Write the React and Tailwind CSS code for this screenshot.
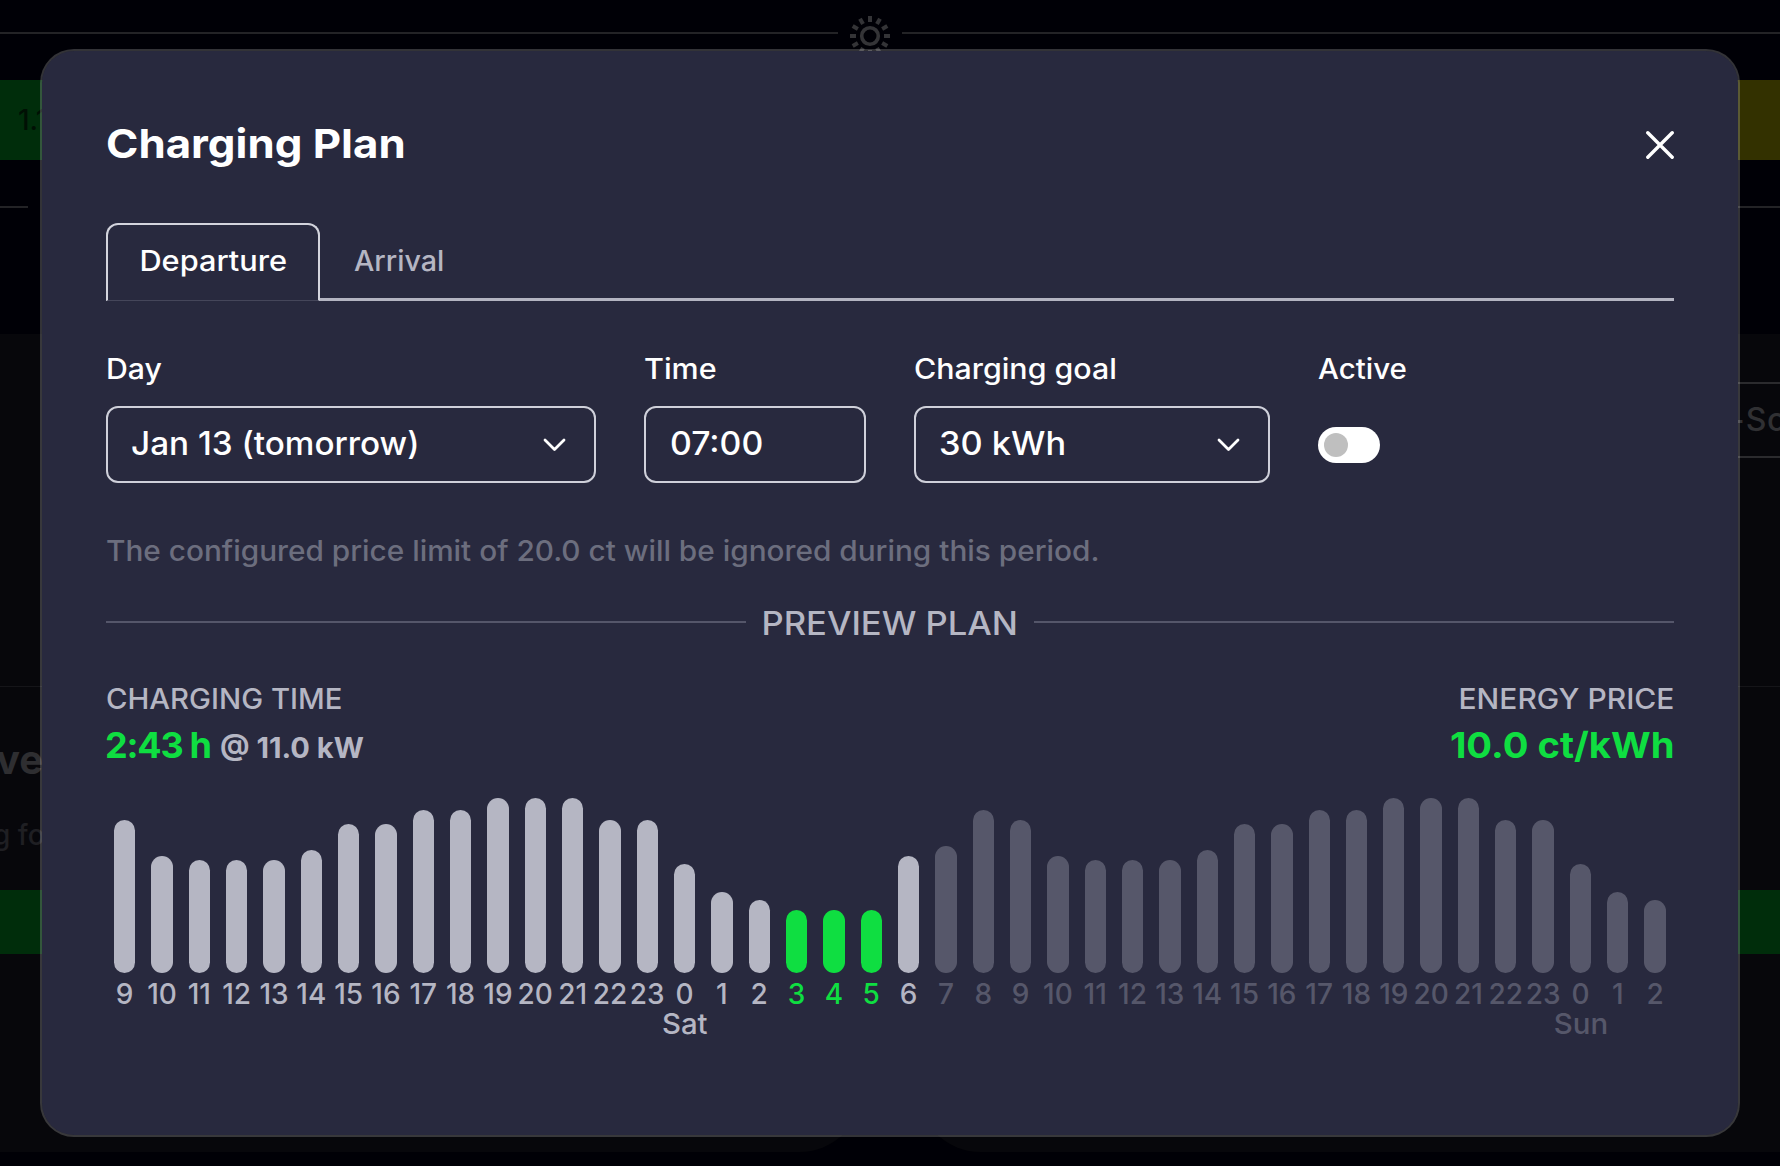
import React from "react";

const HOURS = [
  [9, 153], [10, 117], [11, 113], [12, 113], [13, 113], [14, 123], [15, 149], [16, 149],
  [17, 163], [18, 163], [19, 175], [20, 175], [21, 175], [22, 153], [23, 153],
  [0, 109, "Sat"], [1, 81], [2, 73], [3, 63], [4, 63], [5, 63], [6, 117], [7, 127],
  [8, 163], [9, 153], [10, 117], [11, 113], [12, 113], [13, 113], [14, 123], [15, 149],
  [16, 149], [17, 163], [18, 163], [19, 175], [20, 175], [21, 175], [22, 153], [23, 153],
  [0, 109, "Sun"], [1, 81], [2, 73],
];

function hourTone(index) {
  if (index >= 18 && index <= 20) return "text-[#0fde41]";
  if (index >= 22) return "text-[#b5b6c3] opacity-[0.33]";
  return "text-[#b5b6c3]";
}

function Sun() {
  const rays = Array.from({ length: 12 }, (_, i) => i * 30);
  return (
    <svg className="block h-11 w-11" viewBox="-22 -22 44 44" fill="none" stroke="#343437">
      <circle r="8.3" strokeWidth="3.6" />
      {rays.map((a) => (
        <path key={a} d="M0 -14V-20" strokeWidth="4" transform={`rotate(${a})`} />
      ))}
    </svg>
  );
}

function Chevron() {
  return (
    <svg className="h-[14px] w-[23px]" viewBox="0 0 23 14" fill="none" stroke="#fff" strokeWidth="2.8" strokeLinecap="round" strokeLinejoin="round">
      <path d="M2 2l9.5 9.5L21 2" />
    </svg>
  );
}

function Backdrop() {
  return (
    <div className="flex h-[1166px] flex-col bg-[#000006]">
      <div className="flex h-20 shrink-0 items-start">
        <div className="mt-8 h-0.5 w-[838px] bg-[#232326]" />
        <div className="mt-3.5 flex w-16 justify-center">
          <Sun />
        </div>
        <div className="mt-8 h-0.5 flex-1 bg-[#232326]" />
      </div>
      <div className="flex h-20 shrink-0 justify-between">
        <div className="flex w-[400px] items-center bg-[#002d0b] pl-[18px] text-[28px] font-medium text-[#001004]">1.1 kW</div>
        <div className="w-[400px] bg-[#333100]" />
      </div>
      <div className="mt-[46px] flex h-0.5 shrink-0 justify-between">
        <div className="w-7 bg-[#232326]" />
        <div className="w-[400px] bg-[#232326]" />
      </div>
      <div className="mt-[126px] flex h-[818px] shrink-0 justify-between">
        <div className="flex w-[863px] flex-col rounded-br-[64px] bg-[#07070b]">
          <div className="mt-[352px] h-px shrink-0 bg-[#151519]" />
          <div className="mt-[49px] h-12 whitespace-nowrap text-[40px] font-bold leading-[48px] text-[#2e2e31]">
            <span className="-ml-1">ve</span>
          </div>
          <div className="mt-[31px] h-10 whitespace-nowrap text-[28px] leading-10 text-[#1f1f23]">
            <span className="-ml-[7px]">g fo</span>
          </div>
          <div className="mt-[35px] h-16 shrink-0 bg-[#002d0b]" />
        </div>
        <div className="flex w-[863px] flex-col rounded-bl-[64px] bg-[#07070b]">
          <div className="ml-[440px] mt-12 flex h-[76px] shrink-0 items-center overflow-hidden border-y-2 border-[#2b2b2e] pl-[367px] text-[32px] tracking-[0.5px] text-[#303033]">+So</div>
          <div className="mt-[228px] h-px shrink-0 bg-[#151519]" />
          <div className="mt-[203px] h-16 shrink-0 bg-[#002d0b]" />
        </div>
      </div>
    </div>
  );
}

function Field({ label, labelClass, boxClass, children }) {
  return (
    <div className="flex flex-col">
      <div className="h-10 text-[28px] leading-10">
        <span className={`inline-block origin-left ${labelClass}`}>{label}</span>
      </div>
      <div className={`mt-[17px] flex h-[77px] items-center ${boxClass}`}>{children}</div>
    </div>
  );
}

const BOX = "rounded-xl border-2 border-[#cfd0da]";

function Modal() {
  return (
    <div className="absolute left-10 top-[49px] flex h-[1088px] w-[1700px] flex-col rounded-[34px] border-2 border-white/20 bg-[#28293e] bg-clip-padding px-16">
      <div className="mt-[69px] flex h-12 shrink-0 items-center justify-between">
        <h1 className="origin-left scale-x-[1.095] text-[40px] font-bold leading-[48px]">Charging Plan</h1>
        <svg className="mt-px h-7 w-7" viewBox="0 0 28 28" stroke="#fff" strokeWidth="3.4" strokeLinecap="round">
          <path d="M1.8 1.8L26.2 26.2M26.2 1.8L1.8 26.2" />
        </svg>
      </div>

      <div className="mt-[55px] flex h-[78px] shrink-0">
        <div className="flex w-[214px] justify-center rounded-t-xl border-2 border-b border-[#d3d4dd] border-b-[#45465a] pt-4 text-[28px] leading-10">
          <span className="inline-block scale-x-[1.098]">Departure</span>
        </div>
        <div className="flex-1 border-b-[3px] border-[#b3b4c1] pl-[34px] pt-[18px] text-[28px] leading-10 text-[#b5b6c3]">
          <span className="inline-block origin-left scale-x-[1.025]">Arrival</span>
        </div>
      </div>

      <div className="mt-12 flex h-[134px] shrink-0 gap-12">
        <Field label="Day" labelClass="scale-x-[1.08]" boxClass={`${BOX} w-[490px] justify-between pl-[23px] pr-7`}>
          <span className="origin-left scale-x-[1.04] pb-0.5 text-[32px]">Jan 13 (tomorrow)</span>
          <Chevron />
        </Field>
        <Field label="Time" labelClass="scale-x-[1.09]" boxClass={`${BOX} w-[222px] pl-[24px]`}>
          <span className="origin-left scale-x-[1.056] pb-0.5 text-[32px]">07:00</span>
        </Field>
        <Field label="Charging goal" labelClass="scale-x-[1.084]" boxClass={`${BOX} w-[356px] justify-between pl-[23px] pr-7`}>
          <span className="origin-left scale-x-[1.072] pb-0.5 text-[32px]">30 kWh</span>
          <Chevron />
        </Field>
        <Field label="Active" labelClass="scale-x-[1.054]" boxClass="">
          <div className="flex h-9 w-[62px] items-center rounded-full bg-white px-1.5">
            <div className="h-6 w-6 rounded-full bg-[#bfbfbf]" />
          </div>
        </Field>
      </div>

      <p className="mt-12 h-10 shrink-0 whitespace-nowrap text-[28px] leading-10 text-[#6c6e7e]">
        <span className="inline-block origin-left scale-x-[1.063]">The configured price limit of 20.0 ct will be ignored during this period.</span>
      </p>

      <div className="mt-[29px] flex h-12 shrink-0 items-center">
        <div className="mb-1 h-[2.5px] flex-1 bg-[#55566a]" />
        <div className="w-[288px] text-center text-[32px] leading-[48px] text-[#b5b6c3]">
          <span className="inline-block scale-x-[1.08]">PREVIEW PLAN</span>
        </div>
        <div className="mb-1 h-[2.5px] flex-1 bg-[#55566a]" />
      </div>

      <div className="mt-[31px] flex shrink-0 justify-between text-[#b5b6c3]">
        <div>
          <div className="h-10 text-[28px] leading-10">
            <span className="inline-block origin-left scale-x-[1.047]">CHARGING TIME</span>
          </div>
          <div className="mt-0.5 flex h-12 items-baseline font-bold leading-[48px]">
            <span className="-ml-px text-[36px] tracking-[-1.2px] text-[#0fde41]">2:43</span>
            <span className="ml-[7px] text-[36px] text-[#0fde41]">h</span>
            <span className="ml-2 origin-left scale-x-[1.038] text-[28px]">@ 11.0 kW</span>
          </div>
        </div>
        <div className="text-right">
          <div className="h-10 text-[28px] leading-10">
            <span className="inline-block origin-right scale-x-[1.072]">ENERGY PRICE</span>
          </div>
          <div className="mt-0.5 h-12 text-[36px] font-bold leading-[48px] text-[#0fde41]">
            <span className="inline-block origin-right scale-x-[1.062]">10.0 ct/kWh</span>
          </div>
        </div>
      </div>

      <div className="mt-[29px] flex shrink-0">
        {HOURS.map(([hour, height, day], i) => (
          <div key={i} className={`flex min-w-0 flex-1 flex-col ${hourTone(i)}`}>
            <div className="flex h-[175px] items-end px-2">
              <div className="w-full rounded-full bg-current" style={{ height }} />
            </div>
            <div className="mt-1.5 flex flex-col items-center whitespace-nowrap text-[28px] leading-[30px]">
              <div className="flex h-[30px] w-0 justify-center">
                <span>{hour}</span>
              </div>
              {day && (
                <div className="flex h-[30px] w-0 justify-center">
                  <span className="scale-x-105">{day}</span>
                </div>
              )}
            </div>
          </div>
        ))}
      </div>
    </div>
  );
}

export default function App() {
  return (
    <div className="relative h-[1166px] w-[1780px] overflow-hidden font-[Inter,sans-serif] font-medium text-white">
      <Backdrop />
      <Modal />
    </div>
  );
}
